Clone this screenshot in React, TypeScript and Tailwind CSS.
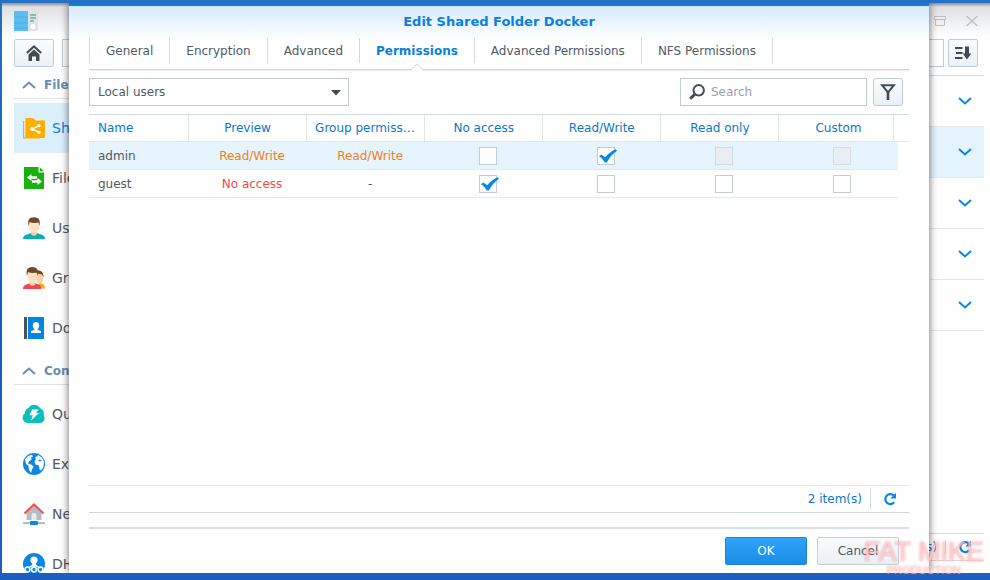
import { useState } from "react";
import type { ReactNode } from "react";

const tabs = [
	"General",
	"Encryption",
	"Advanced",
	"Permissions",
	"Advanced Permissions",
	"NFS Permissions",
];

const columns = [
	"Preview",
	"Group permissions",
	"No access",
	"Read/Write",
	"Read only",
	"Custom",
];

const rights = ["No access", "Read/Write", "Read only", "Custom"];

const users = [
	{
		name: "admin",
		preview: "Read/Write",
		group: "Read/Write",
		granted: "Read/Write",
		locked: ["Read only", "Custom"],
	},
	{
		name: "guest",
		preview: "No access",
		group: "-",
		granted: "No access",
		locked: [] as string[],
	},
];

const tone: Record<string, string> = {
	"Read/Write": "text-[#f08020]",
	"No access": "text-[#ee4b4b]",
	"-": "text-[#505a64]",
};

function Svg({ children }: { children: ReactNode }) {
	return (
		<svg viewBox="0 0 24 24" className="size-6 shrink-0" aria-hidden="true">
			{children}
		</svg>
	);
}

function FolderIcon() {
	return (
		<Svg>
			<path d="M1 5h1.200v16.200H18V22.500H1z" fill="#fbb000" />
			<path d="M3.400 2h8l2 2.400H23V22H3.400z" fill="#fbb000" />
			<path d="M17 9.700 10.500 13 17 16.300" fill="none" stroke="#fff" strokeWidth="1.400" />
			<circle cx="17" cy="9.700" r="1.600" fill="#fff" />
			<circle cx="10.300" cy="13" r="2" fill="#fff" />
			<circle cx="17" cy="16.300" r="1.600" fill="#fff" />
		</Svg>
	);
}

function FileServicesIcon() {
	return (
		<Svg>
			<path d="M2 1h14.500v5.500H22V23H2z" fill="#18b210" />
			<path d="M18 1.500 21.800 5.200H18z" fill="#18b210" />
			<path d="M5 11.500 9.500 8v2.300H15v2.500H9.500V15zM20 15.500 15.500 12v2.300H10v2.500h5.500V19z" fill="#fff" />
		</Svg>
	);
}

function UserIcon() {
	return (
		<Svg>
			<path d="M1 23c0-3 1.500-4 4-4.600l4-1.400h6l4 1.400c2.500.6 4 1.600 4 4.600z" fill="#08b0b4" />
			<path d="M9 13h6v4.500c0 1.200-1.300 2.200-3 2.200s-3-1-3-2.200z" fill="#f5d3a8" />
			<path d="M7 6h10v5c0 3.200-2.500 5.500-5 5.500S7 14.200 7 11z" fill="#fde3c0" />
			<path d="M6.600 10C5.400 4.500 6.800 1.300 12 1.300s6.600 3.200 5.400 8.700L16.500 6.500c-2 .6-6.500.6-9-.6z" fill="#6f4a2c" />
		</Svg>
	);
}

function GroupIcon() {
	return (
		<Svg>
			<path d="M13 22.500h10c0-3.500-1.500-4.500-5-5.500z" fill="#fbb000" />
			<path d="M14 8h7v4.500c0 3-1.500 5-3.500 5S14 15.500 14 12.500z" fill="#f7d2a4" />
			<path d="M14 5c4-1.500 8 .5 7.500 6.500L20 8.500l-5-1z" fill="#6f4a2c" />
			<path d="M1 23c0-3 1.200-4 3.500-4.600L8 17h5l3.500 1.400C18.800 19 19 20 19 23z" fill="#f04656" />
			<path d="M7.500 13h6v4.500c0 1.200-1.300 2.200-3 2.200s-3-1-3-2.200z" fill="#f5d3a8" />
			<path d="M5.500 6h9.500v5c0 3.200-2.300 5.500-4.700 5.500S5.500 14.200 5.500 11z" fill="#fde3c0" />
			<path d="M5 10C3.800 4.500 5 1 10.300 1s6.500 3.500 5.200 9l-1-3.500c-2 .6-6 .6-8.500-.6z" fill="#6f4a2c" />
		</Svg>
	);
}

function DomainIcon() {
	return (
		<Svg>
			<path d="M2 1h3v22H2z" fill="#485460" />
			<path d="M6 1h16v22H6z" fill="#0086e5" />
			<path d="M9 17v-1.500c0-1 2.800-1.300 3.600-2-1.300-1.300-2-3-1.800-4.500.2-2 1.400-3 3.200-3s3 1 3.200 3c.2 1.500-.5 3.200-1.800 4.500.8.7 3.600 1 3.600 2V17z" fill="#fff" />
		</Svg>
	);
}

function CloudIcon() {
	return (
		<Svg>
			<path d="M6 21a5.300 5.300 0 0 1-3-9.700A5 5 0 0 1 6.500 6a7 7 0 0 1 12 .5 5 5 0 0 1 3 6.500A5 5 0 0 1 18.500 21z" fill="#0bbfba" />
			<path d="M10 7.500h6.500L14 11h3L9 18.500l1.800-5.300H7.500z" fill="#fff" />
		</Svg>
	);
}

function GlobeIcon() {
	return (
		<Svg>
			<circle cx="12" cy="12" r="11" fill="#0a86e5" />
			<path d="M3 7.500 6 4l4-1.200 1 1.700-2 1 .5 2L7 9.500l-1 2 3 1 2.500 2-1.500 3-1 3.500-2-3-.5-4L4 12z" fill="#fff" />
			<path d="M13 5.500 16.500 3l3.500 2.800 2 4.200-.5 5-2.500 3.500-1.500-1-.5-4-3.500-1-1-3 1.500-2z" fill="#fff" />
			<path d="m16 8 2.500-.5 1 1.500-2 .6z" fill="#0a86e5" />
		</Svg>
	);
}

function NetworkIcon() {
	return (
		<Svg>
			<path d="M4.500 10.500 12 4.500l7.500 6V18h-15z" fill="#b4bcc5" />
			<path d="M9.500 18v-4.500a2.500 2.500 0 0 1 5 0V18z" fill="#e8ecef" />
			<path d="M2.500 11.500 12 2.600l9.500 8.900" fill="none" stroke="#f15252" strokeWidth="2.200" />
			<path d="M1 20.300h22v1.500H1z" fill="#9aa5b0" />
			<rect x="8" y="19" width="8" height="4" rx="1" fill="#0a86e5" />
		</Svg>
	);
}

function DhcpIcon() {
	return (
		<Svg>
			<circle cx="12" cy="12" r="11" fill="#0a86e5" />
			<circle cx="12" cy="8" r="3.600" fill="#fff" />
			<path d="M10.800 11h2.400v3h-2.400zM11 13l-5 3M13 13l5 3" stroke="#fff" strokeWidth="1.400" fill="#fff" />
			<g fill="#0a86e5" stroke="#fff" strokeWidth="1.500">
				<circle cx="5.500" cy="17.500" r="2.400" />
				<circle cx="12" cy="17.500" r="2.400" />
				<circle cx="18.500" cy="17.500" r="2.400" />
			</g>
		</Svg>
	);
}

function Chevron({ className }: { className: string }) {
	return (
		<svg viewBox="0 0 14 8" className={className} fill="none" stroke="currentColor" aria-hidden="true">
			<path d="M1 1 7 6.500 13 1" strokeWidth="2" />
		</svg>
	);
}

function Reload() {
	return (
		<svg viewBox="0 0 14 14" className="size-3.5" aria-hidden="true">
			<path d="M11.200 10.300A5 5 0 1 1 10.800 3.500" fill="none" stroke="#0a86e5" strokeWidth="2.200" />
			<path d="M13 .8V6.500H7.300z" fill="#0a86e5" />
		</svg>
	);
}

const sections = [
	{
		title: "File Sharing",
		items: [
			{ label: "Shared Folder", icon: <FolderIcon />, active: true },
			{ label: "File Services", icon: <FileServicesIcon /> },
			{ label: "User", icon: <UserIcon /> },
			{ label: "Group", icon: <GroupIcon /> },
			{ label: "Domain/LDAP", icon: <DomainIcon /> },
		],
	},
	{
		title: "Connectivity",
		items: [
			{ label: "QuickConnect", icon: <CloudIcon /> },
			{ label: "External Access", icon: <GlobeIcon /> },
			{ label: "Network", icon: <NetworkIcon /> },
			{ label: "DHCP Server", icon: <DhcpIcon /> },
		],
	},
];

function Sidebar() {
	return (
		<nav className="w-52 shrink-0">
			{sections.map((section) => (
				<div key={section.title}>
					<h2 className="mb-1 flex h-8 items-center gap-2 border-b border-[#dfe3e7] pt-1 pl-2 text-xs font-bold text-[#6a8db0]">
						<Chevron className="h-2 w-3.5 rotate-180" />
						{section.title}
					</h2>
					{section.items.map((item) => (
						<a
							key={item.label}
							href="#"
							className={
								"active" in item && item.active
									? "flex h-[50px] items-center gap-1 bg-[#dceffd] pl-2 text-sm text-[#0a80dc]"
									: "flex h-[50px] items-center gap-1 pl-2 text-sm text-[#505a64]"
							}
						>
							{item.icon}
							<span className="pl-0.5 whitespace-nowrap">{item.label}</span>
						</a>
					))}
				</div>
			))}
		</nav>
	);
}

function ControlPanel() {
	return (
		<div className="flex h-full flex-col bg-[linear-gradient(#8f9197,#dfe0e3_4px,#fff_34px)] pr-1.5 pl-3">
			<header className="flex h-9 shrink-0 items-center justify-between">
				<svg viewBox="0 0 24 20" className="h-5 w-6" aria-hidden="true">
					<path d="M0 0h14v20H0z" fill="#5cbdf0" />
					<path d="M0 6h14M0 12h14M0 17h14" stroke="#4fb2e8" />
					<path d="M14 0h10v20H14z" fill="#dde4e9" />
					<path d="M16 4h6M16 7h6M16 10h4" stroke="#71a9b4" strokeWidth="1.500" />
					<path d="M19 4h3M17 7h2" stroke="#a5c23c" strokeWidth="1.500" />
					<circle cx="19" cy="15.500" r="2.500" fill="#fff" />
				</svg>
				<div className="flex items-center gap-5 text-[#bcbec2]">
					<button aria-label="Maximize">
						<svg viewBox="0 0 12 10" className="h-2.5 w-3" fill="none" stroke="currentColor" aria-hidden="true">
							<path d="M.5.500h11v3H.5zM1.500 3.500v6h9v-6" />
						</svg>
					</button>
					<button aria-label="Close" className="mr-1.5">
						<svg viewBox="0 0 12 10" className="h-2.5 w-3" fill="none" stroke="currentColor" strokeWidth="1.300" aria-hidden="true">
							<path d="M.5 0 11.500 10M11.500 0 .5 10" />
						</svg>
					</button>
				</div>
			</header>
			<div className="flex h-7 shrink-0 gap-2 pr-1.5">
				<button
					aria-label="Home"
					className="flex w-10 items-center justify-center rounded-xs border border-[#c3ccd4] bg-linear-to-b from-[#fbfcfd] to-[#eaf1f8]"
				>
					<svg viewBox="0 0 16 16" className="size-4" aria-hidden="true">
						<path d="M.8 8 8 1.400 15.200 8" fill="none" stroke="#414b55" strokeWidth="2" />
						<path d="M2.500 9.500 8 4.500l5.500 5V16H10v-4.500H6V16H2.500z" fill="#414b55" />
					</svg>
				</button>
				<input
					aria-label="Search settings"
					className="w-0 grow border border-[#c3ccd4] bg-white"
				/>
				<button
					aria-label="Sort"
					className="-ml-1 flex w-[30px] items-center justify-center rounded-xs border border-[#c3ccd4] bg-linear-to-b from-[#fbfcfd] to-[#eaf1f8]"
				>
					<svg viewBox="0 0 16 14" className="h-3.5 w-4" fill="#414b55" aria-hidden="true">
						<path d="M0 1h7.500v2H0zM1 6h6.500v2H1zM0 11h7.500v2H0zM10 .5h4v7h2.300L12 13.500 7.700 7.500H10z" />
					</svg>
				</button>
			</div>
			<div className="flex min-h-0 grow gap-3">
				<Sidebar />
				<section className="flex grow flex-col pt-2 pb-3">
					<div className="grow border-t border-[#d5dbe0]">
						{[0, 1, 2, 3, 4].map((row) => (
							<div
								key={row}
								className={
									row === 1
										? "flex h-[51px] items-center justify-end border-b border-[#e3e7ea] bg-[#e4f4fe] pr-3 text-[#0a86e5]"
										: "flex h-[51px] items-center justify-end border-b border-[#e3e7ea] pr-3 text-[#0a86e5]"
								}
							>
								<Chevron className="h-2 w-3.5" />
							</div>
						))}
					</div>
					<footer className="flex h-7 items-center justify-end border-y border-[#d5dbe0] pr-3 text-xs text-[#0a80dc]">
						<span className="mr-2">5 item(s)</span>
						<button aria-label="Reload folders" className="border-l border-[#d5dbe0] pl-3">
							<Reload />
						</button>
					</footer>
				</section>
			</div>
		</div>
	);
}

function PermissionBox({
	label,
	checked,
	disabled,
	onChange,
}: {
	label: string;
	checked: boolean;
	disabled: boolean;
	onChange: () => void;
}) {
	return (
		<label className="relative mx-auto block size-[18px]">
			<input
				type="checkbox"
				aria-label={label}
				checked={checked}
				disabled={disabled}
				onChange={onChange}
				className="peer block size-[18px] appearance-none border border-[#c2ccd4] bg-white disabled:border-[#d3dde4] disabled:bg-[#e9eef2]"
			/>
			<svg
				viewBox="0 0 18 14"
				className="pointer-events-none absolute top-0.5 left-0.5 hidden h-3.5 w-[18px] peer-checked:block"
				aria-hidden="true"
			>
				<path d="M0 7.200 2.200 5.500 6.300 8.300C9 5 12.500 2 16.500.3L18 1.800C13.500 4.800 10.200 9 7.800 13.500H5.800C4.500 11 2.500 8.800 0 7.200z" fill="#0a86e5" />
			</svg>
		</label>
	);
}

function PermissionTable() {
	const [granted, setGranted] = useState<Record<string, string>>(
		Object.fromEntries(users.map((u) => [u.name, u.granted])),
	);
	return (
		<table className="w-full table-fixed border-separate border-spacing-0 text-center">
			<colgroup>
				<col className="w-[12.2%]" />
				<col span={6} className="w-[14.4%]" />
				<col />
			</colgroup>
			<thead>
				<tr className="text-[#0a78cc] *:h-7 *:border-t *:border-b *:border-t-[#d0d9e0] *:border-b-[#e3e9ee]">
					<th className="border-r border-r-[#dfe6ec] pl-[9px] text-left font-normal">Name</th>
					{columns.map((col) => (
						<th
							key={col}
							className={
								col === "Custom"
									? "relative px-2 font-normal"
									: "truncate border-r border-r-[#dfe6ec] px-2 font-normal"
							}
						>
							{col}
							{col === "Custom" && (
								<span className="absolute inset-y-0 right-1 border-r border-[#dfe6ec]" />
							)}
						</th>
					))}
					<th />
				</tr>
			</thead>
			<tbody>
				{users.map((user) => (
					<tr
						key={user.name}
						className="*:h-7 *:border-b *:border-[#e6eaee] first:*:bg-[#e6f4fe] *:last:border-0 *:last:bg-white!"
					>
						<td className="pl-[9px] text-left text-[#505a64]">{user.name}</td>
						<td className={`pl-2 ${tone[user.preview]}`}>{user.preview}</td>
						<td className={`pl-2 ${tone[user.group]}`}>{user.group}</td>
						{rights.map((right) => (
							<td key={right} className="pl-2">
								<PermissionBox
									label={`${user.name} ${right}`}
									checked={granted[user.name] === right}
									disabled={user.locked.includes(right)}
									onChange={() => setGranted({ ...granted, [user.name]: right })}
								/>
							</td>
						))}
						<td />
					</tr>
				))}
			</tbody>
		</table>
	);
}

function EditFolderDialog() {
	const [tab, setTab] = useState("Permissions");
	return (
		<div
			role="dialog"
			aria-labelledby="dialog-title"
			className="absolute inset-y-0 right-[61px] left-[67px] flex flex-col border-t-3 border-[#0a80dc] bg-white bg-[linear-gradient(#d6eafa,#fff_34px)] px-5 text-xs shadow-[0_0_8px_rgba(0,0,0,0.6)]"
		>
			<h1 id="dialog-title" className="flex h-8 shrink-0 items-center justify-center text-[13px] font-bold text-[#0a80dc]">
				Edit Shared Folder Docker
			</h1>
			<div role="tablist" className="flex h-8 shrink-0 border-b border-[#cdd2d6] pb-1.5 shadow-[0_1px_1px_rgba(0,0,0,0.06)]">
				{tabs.map((name) => (
					<button
						key={name}
						role="tab"
						aria-selected={tab === name}
						onClick={() => setTab(name)}
						className={
							tab === name
								? "relative border-r border-[#d5dade] px-4 font-bold text-[#0a80dc] first:border-l"
								: "relative border-r border-[#d5dade] px-4 text-[#505a64] first:border-l"
						}
					>
						{name}
						{tab === name && (
							<svg viewBox="0 0 14 8" className="absolute -bottom-2 left-1/2 -ml-[7px] h-2 w-3.5" aria-hidden="true">
								<path d="M0 8 7 1l7 7z" fill="#fff" />
								<path d="M0 7.500 7 1l7 6.500" fill="none" stroke="#cdd2d6" />
							</svg>
						)}
					</button>
				))}
			</div>
			<div className="flex shrink-0 items-center gap-1.5 py-2 pr-1.5">
				<div className="relative mr-auto w-[260px]">
					<select
						aria-label="User source"
						className="block h-7 w-full appearance-none border border-[#c0cad2] bg-white pl-2 text-[#505a64]"
					>
						<option>Local users</option>
						<option>Local groups</option>
						<option>System internal user</option>
					</select>
					<svg viewBox="0 0 10 6" className="pointer-events-none absolute top-3 right-2 h-1.5 w-2.5" aria-hidden="true">
						<path d="M0 0h10L5 5.500z" fill="#414b55" />
					</svg>
				</div>
				<label className="flex h-7 w-[187px] items-center gap-1.5 border border-[#c0cad2] bg-white pl-2">
					<svg viewBox="0 0 16 16" className="size-4 shrink-0" fill="none" stroke="#414b55" aria-hidden="true">
						<circle cx="9.700" cy="6.300" r="5.200" strokeWidth="2" />
						<path d="M5.800 10.200 1.200 14.800" strokeWidth="3" />
					</svg>
					<input
						aria-label="Search"
						placeholder="Search"
						className="w-0 grow outline-none placeholder:text-[#9aa1a8]"
					/>
				</label>
				<button
					aria-label="Filter"
					className="flex h-7 w-[30px] items-center justify-center rounded-xs border border-[#c0cad2] bg-linear-to-b from-[#fbfcfd] to-[#eaf1f8]"
				>
					<svg viewBox="0 0 16 16" className="size-4" fill="none" stroke="#414b55" strokeWidth="2" aria-hidden="true">
						<path d="M2 1.200h12L8 8.500z" />
						<path d="M8 7.500V16" strokeWidth="2.600" />
					</svg>
				</button>
			</div>
			<div className="grow">
				<PermissionTable />
			</div>
			<div className="flex h-7 shrink-0 items-center justify-end gap-2 border-y border-t-[#e3e7ea] border-b-[#cdd8e2] pr-3 text-[#0a78cc]">
				<span>2 item(s)</span>
				<button aria-label="Reload" className="flex h-5 items-center border-l border-[#cdd8e2] pl-3">
					<Reload />
				</button>
			</div>
			<div className="mt-3.5 flex shrink-0 justify-end gap-2.5 border-t-2 border-[#dcdfe1] pt-2 pr-2.5 pb-2">
				<button className="h-7 w-[82px] rounded-xs border border-[#1a86d8] bg-linear-to-b from-[#2ea4fb] to-[#1a8ce8] text-white">
					OK
				</button>
				<button className="h-7 w-[82px] rounded-xs border border-[#c6d0d8] bg-linear-to-b from-[#f9fbfc] to-[#e9f0f6] text-[#505a64]">
					Cancel
				</button>
			</div>
		</div>
	);
}

export default function App() {
	return (
		<main className="relative h-screen overflow-hidden bg-linear-to-b from-[#2470c4] via-[#1560b8] to-[#1c5fc0] pt-[3px] pb-[7px] pl-0.5 font-['DejaVu_Sans',Verdana,sans-serif]">
			<div className="relative h-full overflow-hidden bg-white">
				<ControlPanel />
				<EditFolderDialog />
			</div>
			<p className="pointer-events-none absolute right-1.5 bottom-1 text-center font-['Liberation_Sans',sans-serif] text-[#fbdcdc]/60 [text-shadow:0_0_3px_rgba(240,72,72,0.55)]">
				<span className="block text-[27px] leading-6">FAT MIKE</span>
				<span className="block text-[11px] leading-3">PRODUCTION</span>
			</p>
		</main>
	);
}
